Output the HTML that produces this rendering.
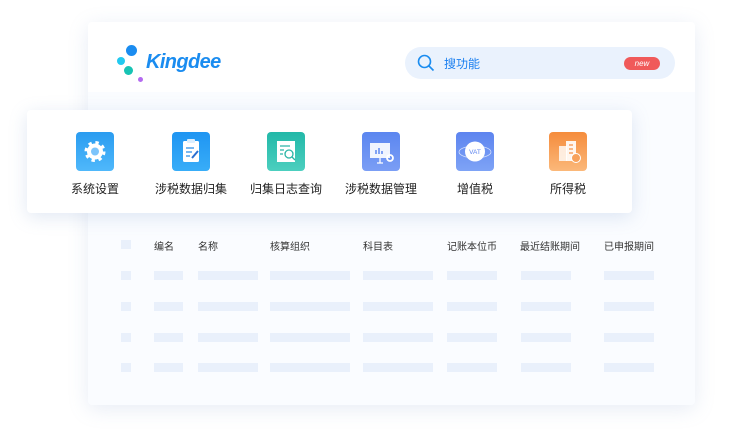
<!DOCTYPE html>
<html><head><meta charset="utf-8"><style>
*{margin:0;padding:0;box-sizing:border-box}
body{width:732px;height:447px;background:#fff;position:relative;overflow:hidden;font-family:"Liberation Sans","Noto Sans CJK SC",sans-serif}
.main{position:absolute;left:88px;top:22px;width:607px;height:383px;background:#fafcff;border-radius:4px;box-shadow:0 4px 20px rgba(120,150,200,.18)}
.top{position:absolute;left:0;top:0;width:607px;height:70px;background:#fff;border-radius:4px 4px 0 0}
.dot{position:absolute;border-radius:50%}
.logo{position:absolute;left:146px;top:51px;font-size:20px;font-weight:bold;font-style:italic;color:#1a8cf0;letter-spacing:-.6px}
.search{position:absolute;left:405px;top:47px;width:270px;height:32px;background:#eaf2fd;border-radius:16px}
.search span{position:absolute;left:39px;top:8px;font-size:12px;color:#1a7ff0}
.new{position:absolute;left:219px;top:10px;width:36px;height:13px;background:#f05a5a;border-radius:7px;color:#fff;font-size:8px;text-align:center;line-height:13px;font-style:italic}
.feat{position:absolute;left:27px;top:110px;width:605px;height:103px;background:#fff;border-radius:4px;box-shadow:0 4px 18px rgba(120,150,200,.22)}
.ic{position:absolute;top:132px;width:38px;height:39px;border-radius:4px}
.lb{position:absolute;top:180px;font-size:12px;color:#222;width:100px;text-align:center}
.th{position:absolute;top:238px;font-size:10px;color:#333}
.bar{position:absolute;height:9px;background:#e9f0fb}
</style></head><body>
<div class="main"><div class="top"></div></div>
<div class="dot" style="left:126px;top:45px;width:11px;height:11px;background:#1a8cf0"></div>
<div class="dot" style="left:117px;top:57px;width:8px;height:8px;background:#22c9f0"></div>
<div class="dot" style="left:124px;top:66px;width:9px;height:9px;background:#17c3b4"></div>
<div class="dot" style="left:138px;top:77px;width:5px;height:5px;background:#b46af0"></div>
<div class="logo">Kingdee</div>
<div class="search">
<svg style="position:absolute;left:12px;top:7px" width="18" height="18" viewBox="0 0 18 18"><circle cx="7.5" cy="7.5" r="6" fill="none" stroke="#1a8cf0" stroke-width="1.6"/><path d="M12 12l4.5 4.5" stroke="#1a8cf0" stroke-width="1.6"/></svg>
<span>搜功能</span><div class="new">new</div></div>
<div class="feat"></div>
<div class="ic" style="left:76px;background:linear-gradient(#2a9cf0,#4fb8fb)"><svg width="38" height="39" viewBox="0 0 38 39"><circle cx="19" cy="19.5" r="8" fill="#fff" stroke="#fff" stroke-width="5" stroke-dasharray="3 3.3"/><circle cx="19" cy="19.5" r="4" fill="#7cc4fb"/></svg></div>
<div class="ic" style="left:172px;background:linear-gradient(#1f95f2,#38adf8)"><svg width="38" height="39" viewBox="0 0 38 39"><rect x="11" y="9" width="16" height="21" rx="1.5" fill="#fff"/><rect x="15" y="7" width="8" height="4" rx="1" fill="#dbeefe"/><path d="M14 16h8M14 20h6M14 24h4" stroke="#2a8ee8" stroke-width="1.3"/><path d="M20 26l6-7" stroke="#2a6fd0" stroke-width="2"/></svg></div>
<div class="ic" style="left:267px;background:linear-gradient(#22b8a8,#4ccfbf)"><svg width="38" height="39" viewBox="0 0 38 39"><rect x="10" y="9" width="18" height="21" fill="#fff"/><path d="M13 14h10M13 18h4M13 22h3" stroke="#2ab5a6" stroke-width="1.2"/><circle cx="22" cy="22" r="4" fill="none" stroke="#2ab5a6" stroke-width="1.3"/><path d="M25 25l3 3" stroke="#2ab5a6" stroke-width="1.3"/></svg></div>
<div class="ic" style="left:362px;background:linear-gradient(#5b86f0,#7b9ef5)"><svg width="38" height="39" viewBox="0 0 38 39"><rect x="8" y="11" width="20" height="15" fill="#fff" opacity=".9"/><path d="M14 22v-4M17 22v-6M20 22v-3" stroke="#5b86f0" stroke-width="1.5"/><path d="M18 26v5M15 31h6" stroke="#fff" stroke-width="1.3"/><circle cx="28" cy="26" r="3" fill="none" stroke="#fff" stroke-width="1.8"/></svg></div>
<div class="ic" style="left:456px;background:linear-gradient(#5d84ef,#7ea3f6)"><svg width="38" height="39" viewBox="0 0 38 39"><ellipse cx="19" cy="20" rx="16" ry="6" fill="none" stroke="#fff" stroke-width=".8" opacity=".7"/><circle cx="19" cy="19.5" r="10" fill="#fff"/><text x="19" y="22" font-size="6.5" fill="#5d84ef" text-anchor="middle" font-family="Liberation Sans">VAT</text></svg></div>
<div class="ic" style="left:549px;background:linear-gradient(#f58c3c,#fbb87a)"><svg width="38" height="39" viewBox="0 0 38 39"><rect x="10" y="14" width="8" height="15" fill="#fff" opacity=".8"/><rect x="17" y="9" width="10" height="20" fill="#fff" opacity=".9"/><path d="M20 13h4M20 17h4M20 21h4" stroke="#f5924a" stroke-width="1.3"/><circle cx="27" cy="26" r="4.5" fill="#f8a25c" stroke="#fff"/></svg></div>
<div class="lb" style="left:45px">系统设置</div>
<div class="lb" style="left:141px">涉税数据归集</div>
<div class="lb" style="left:236px">归集日志查询</div>
<div class="lb" style="left:331px">涉税数据管理</div>
<div class="lb" style="left:425px">增值税</div>
<div class="lb" style="left:518px">所得税</div>
<div class="bar" style="left:121px;top:240px;width:10px"></div>
<div class="th" style="left:154px">编名</div><div class="th" style="left:198px">名称</div><div class="th" style="left:270px">核算组织</div><div class="th" style="left:363px">科目表</div><div class="th" style="left:447px">记账本位币</div><div class="th" style="left:520px">最近结账期间</div><div class="th" style="left:604px">已申报期间</div>
<div id="rows"></div>
<script>
var ys=[271,302,333,363],cols=[[121,10],[154,29],[198,60],[270,80],[363,70],[447,50],[521,50],[604,50]],h='';
ys.forEach(function(y){cols.forEach(function(c){h+='<div class="bar" style="left:'+c[0]+'px;top:'+y+'px;width:'+c[1]+'px"></div>'})});
document.getElementById('rows').innerHTML=h;
</script>
</body></html>
